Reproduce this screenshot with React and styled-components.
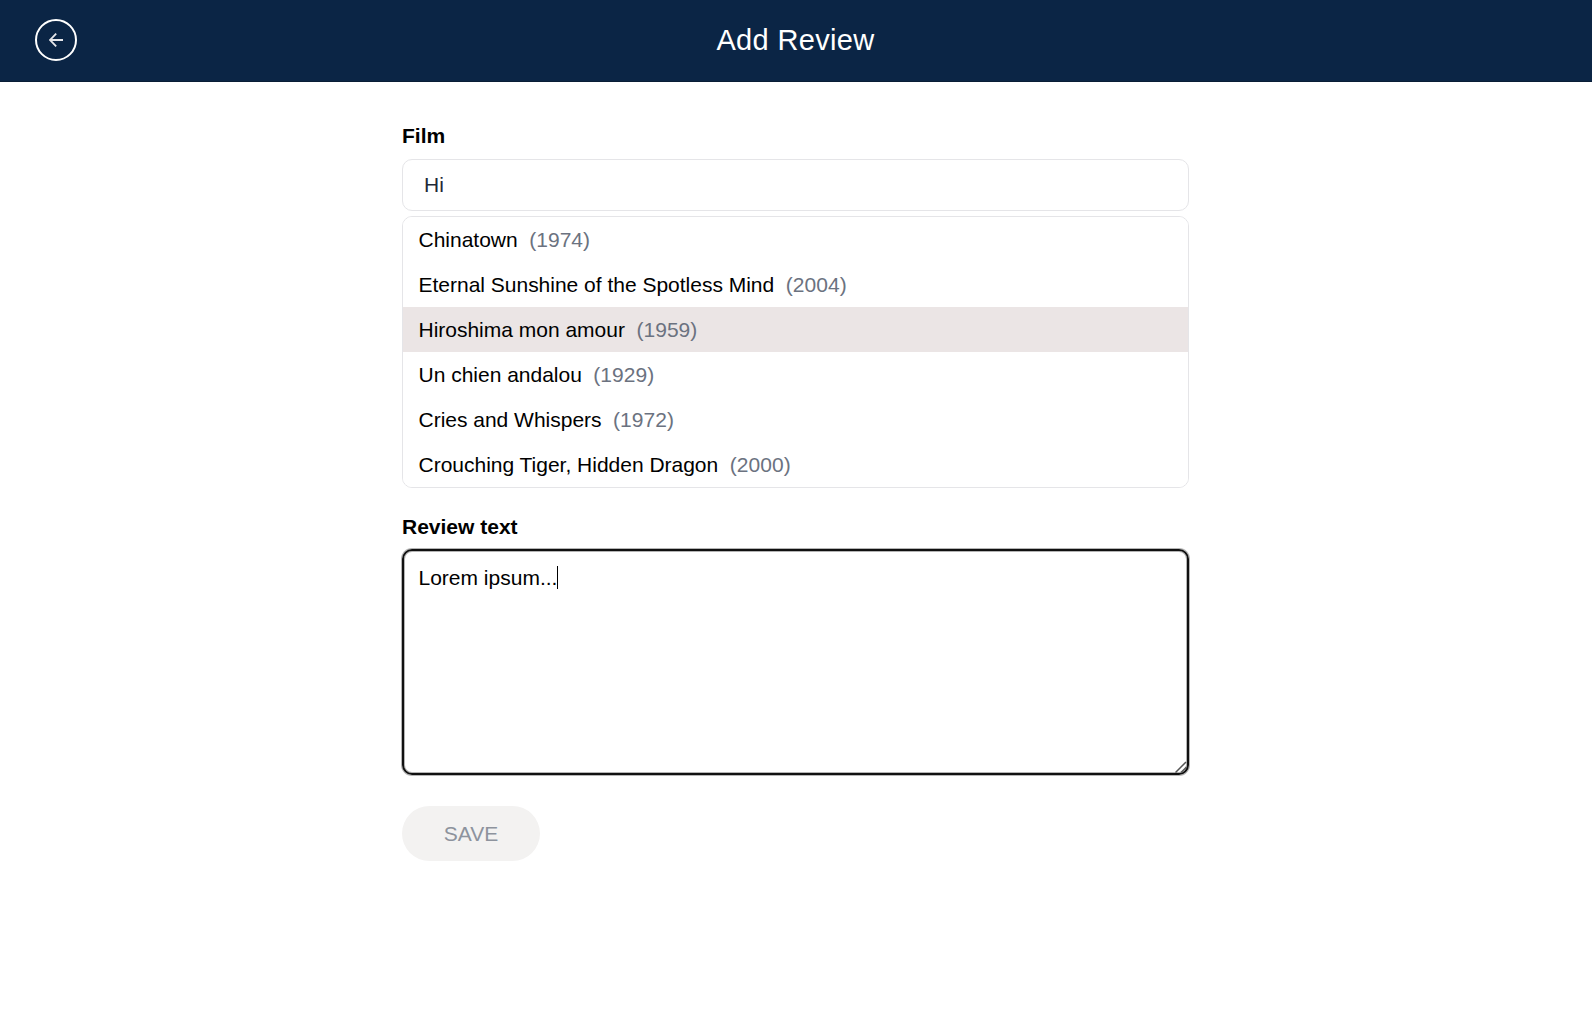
import React from "react";
import styled, { createGlobalStyle } from "styled-components";

const GlobalStyle = createGlobalStyle`
  * { box-sizing: border-box; }
  body {
    margin: 0;
    background: #fff;
    color: #000;
    font: 21px/27px "Liberation Sans", Arial, sans-serif;
  }
`;

const Header = styled.header`
  display: grid;
  grid-template-columns: 1fr auto 1fr;
  align-items: center;
  height: 82px;
  padding: 0 35px 2px;
  background: #0b2545;
  border-bottom: 1px solid #091d36;
  color: #fff;
`;

const BackButton = styled.button`
  display: flex;
  align-items: center;
  justify-content: center;
  width: 42px;
  height: 42px;
  padding: 0;
  border: 2px solid #fff;
  border-radius: 50%;
  background: transparent;
  color: #e6e6ea;
`;

const Title = styled.h1`
  margin: 0 1px 0 0;
  font-size: 29px;
  line-height: 40px;
  font-weight: 400;
  letter-spacing: 0.35px;
`;

const Form = styled.form`
  display: flex;
  flex-direction: column;
  align-items: stretch;
  width: 787px;
  margin: 0 403px 0 402px;
  padding-top: 40px;
`;

const Label = styled.label`
  height: 27px;
  margin-bottom: 10px;
  font-weight: 700;
`;

const FilmInput = styled.input`
  height: 52px;
  padding: 0 21px;
  border: 1px solid #e5e5e8;
  border-radius: 10px;
  outline: none;
  background: #fff;
  color: #1f2937;
  font: inherit;
`;

const Options = styled.ul`
  margin: 5px 0 25px;
  padding: 0;
  border: 1px solid #e5e5e8;
  border-radius: 10px;
  overflow: hidden;
  list-style: none;
`;

const Option = styled.li`
  display: flex;
  align-items: center;
  gap: 11.5px;
  height: 45px;
  padding: 0 15.5px;
  background: ${(p) => (p.$active ? "#ebe5e5" : "#fff")};
  letter-spacing: -0.01px;
`;

const Year = styled.span`
  color: #6b7280;
  letter-spacing: 0.04px;
`;

const ReviewBox = styled.div`
  position: relative;
  display: flex;
  align-items: flex-start;
  height: 226px;
  margin: -1px 0 31px;
  padding: 13px 14.5px;
  border: 2px solid #101010;
  border-radius: 10px;
  box-shadow: 0 0 0 1px #b4b4b4, inset 0 0 0 1px #b4b4b4;
  outline: none;
  white-space: pre;
`;

const Caret = styled.span`
  width: 1px;
  height: 23px;
  margin-top: 2px;
  margin-left: -0.5px;
  background: #000;
`;

const Grip = styled.svg`
  position: absolute;
  right: 0;
  bottom: 0;
`;

const SaveButton = styled.button`
  align-self: flex-start;
  width: 138px;
  height: 55px;
  padding: 0;
  border: 0;
  border-radius: 28px;
  background: #f3f2f1;
  color: #8d939d;
  font: inherit;
`;

const films = [
  { title: "Chinatown", year: 1974 },
  { title: "Eternal Sunshine of the Spotless Mind", year: 2004 },
  { title: "Hiroshima mon amour", year: 1959 },
  { title: "Un chien andalou", year: 1929 },
  { title: "Cries and Whispers", year: 1972 },
  { title: "Crouching Tiger, Hidden Dragon", year: 2000 },
];

export default function App() {
  return (
    <>
      <GlobalStyle />
      <Header>
        <BackButton aria-label="Back">
          <svg width="14" height="14" viewBox="0 0 14 14" fill="none" stroke="currentColor" strokeWidth="1.8">
            <path d="M14 7H1M7.2 0.6L0.9 7l6.3 6.4" />
          </svg>
        </BackButton>
        <Title>Add Review</Title>
      </Header>
      <Form>
        <Label htmlFor="film">Film</Label>
        <FilmInput id="film" defaultValue="Hi" />
        <Options>
          {films.map((f) => (
            <Option key={f.title} $active={f.year === 1959}>
              <span>{f.title}</span>
              <Year>({f.year})</Year>
            </Option>
          ))}
        </Options>
        <Label>Review text</Label>
        <ReviewBox role="textbox" tabIndex={0}>
          <span>Lorem ipsum...</span>
          <Caret />
          <Grip width="12" height="12" viewBox="0 0 12 12" stroke="#555" strokeWidth="1.5">
            <path d="M0.5 11.5L11 1M6 11.5L11.5 6" />
          </Grip>
        </ReviewBox>
        <SaveButton type="button" disabled>SAVE</SaveButton>
      </Form>
    </>
  );
}
